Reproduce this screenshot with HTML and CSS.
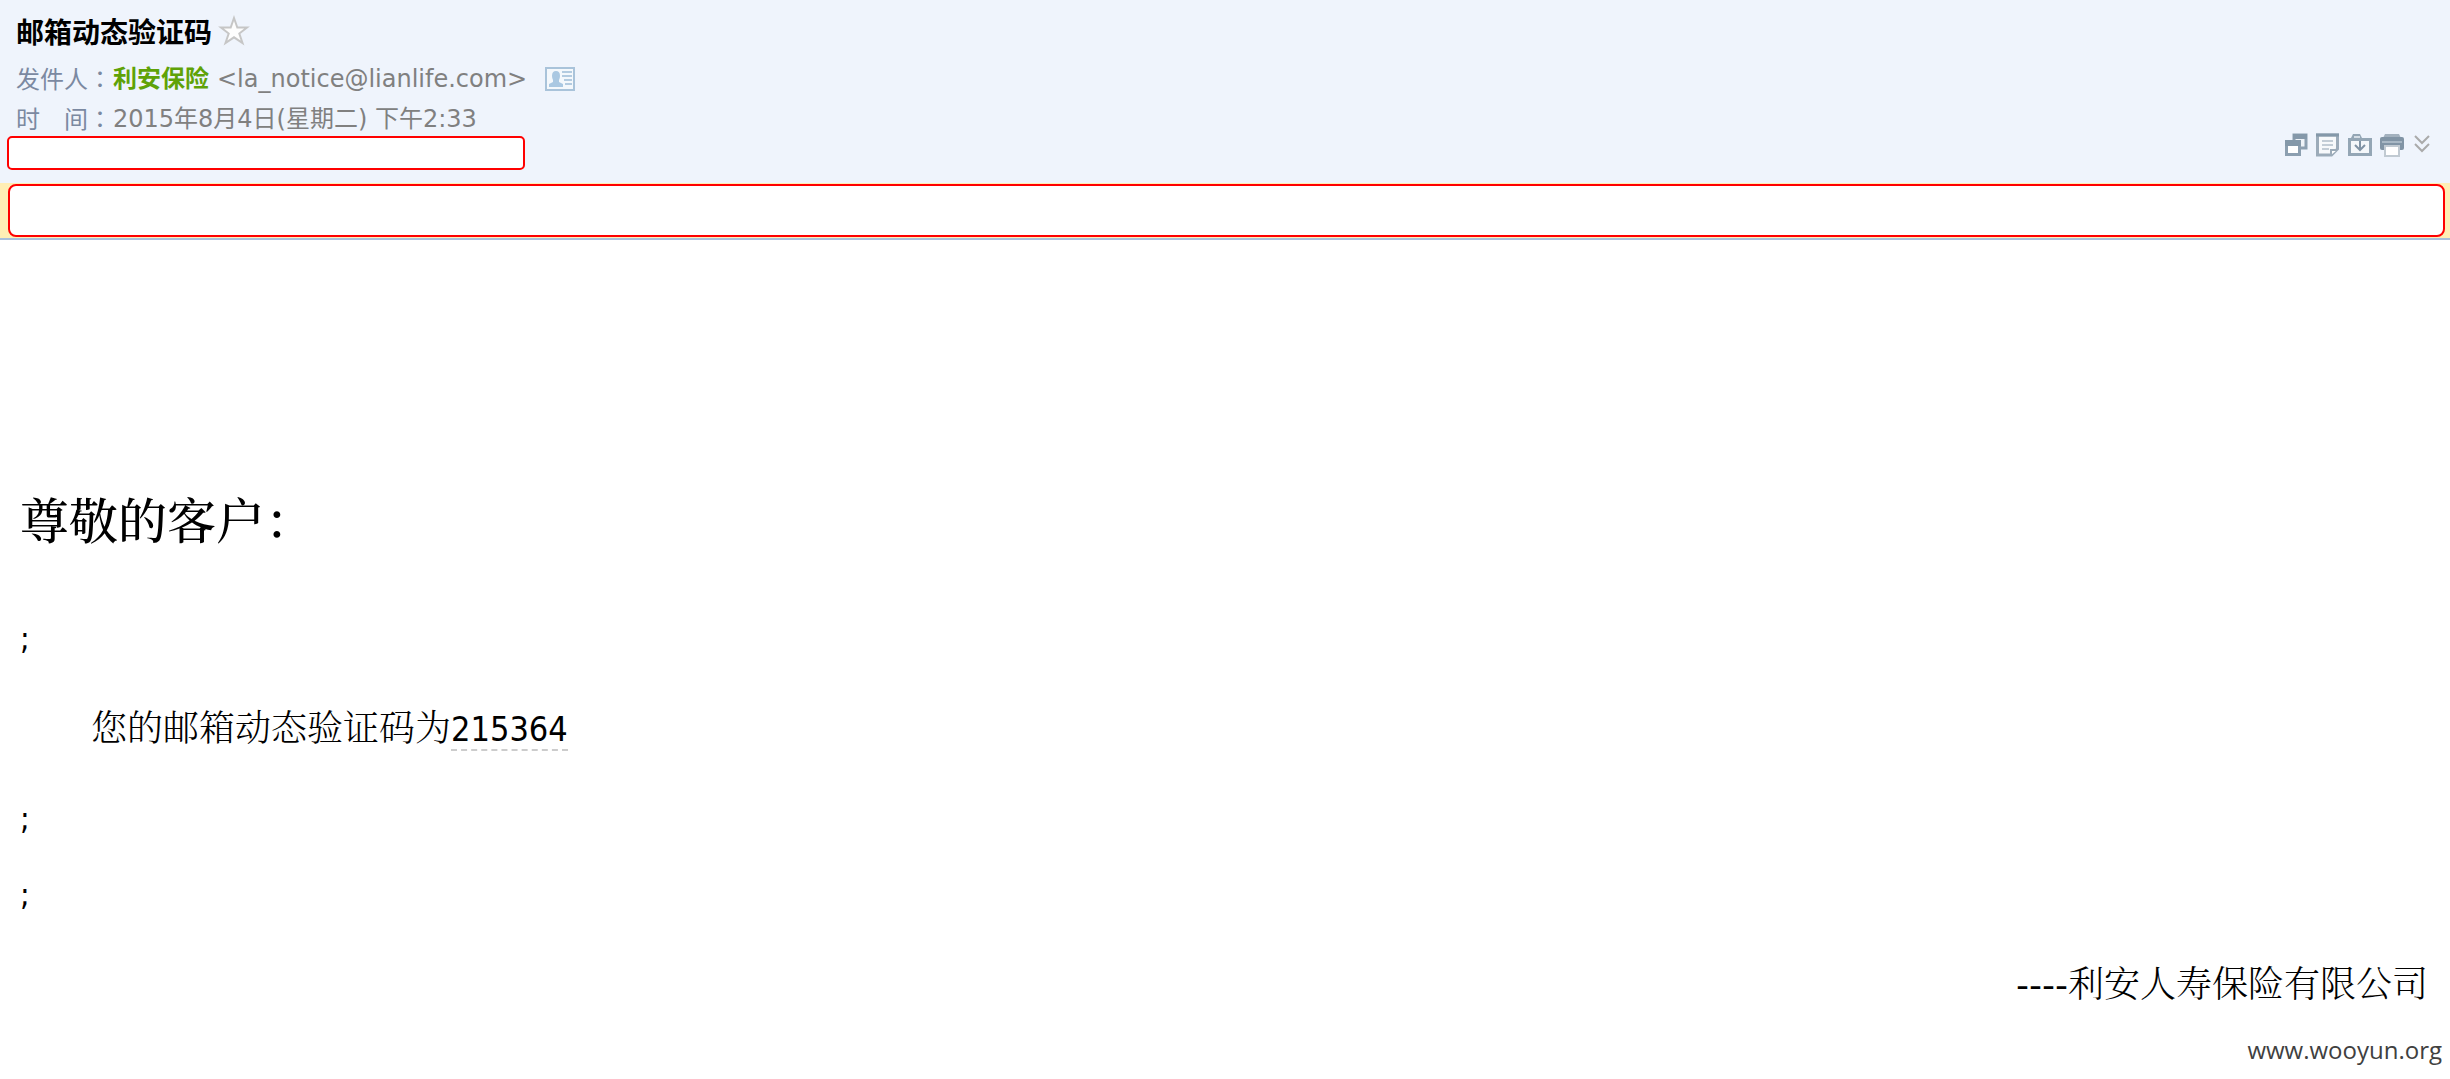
FILE: index.html
```html
<!DOCTYPE html>
<html lang="zh-CN">
<head>
<meta charset="utf-8">
<title>邮箱动态验证码</title>
<link rel="stylesheet" href="styles.css">
</head>
<body>
<header class="mail-head">
  <div class="subject-row">
    <h1 class="subject">邮箱动态验证码</h1>
    <button class="icon-btn" type="button" aria-label="星标">
      <svg width="32" height="32" viewBox="0 0 32 32"><path d="M16 3 L19.300 12.500 H29 L21.300 18.500 L24.500 28 L16 22.300 L7.500 28 L10.700 18.500 L3 12.500 H12.700 Z" fill="#fdfdfd" stroke="#c6c6c6" stroke-width="2"/></svg>
    </button>
  </div>
  <div class="meta-row">
    <span class="label">发件人<span class="colon" lang="zh-TW">：</span></span><b class="sender">利安保险</b>
    <span class="address">&lt;la_notice@lianlife.com&gt;</span>
    <button class="icon-btn card-btn" type="button" aria-label="联系人资料">
      <svg width="30" height="24" viewBox="0 0 30 24"><rect x="1" y="1" width="28" height="22" fill="#f4f8fc" stroke="#a9c3da" stroke-width="2"/><path d="M4 20v-3l4-2v-2q-1-2-1-4 0-5 4-5t4 5q0 2-1 4v2l4 2v3z" fill="#aac8e2"/><path d="M17 5h10M17 9h10M19 13h8M20 17h7" stroke="#b3cbe0" stroke-width="2"/></svg>
    </button>
  </div>
  <div class="meta-row">
    <span class="label">时　间<span class="colon" lang="zh-TW">：</span></span><time class="date" datetime="2015-08-04T14:33">2015年8月4日(星期二) 下午2:33</time>
  </div>
  <div class="tool-row">
    <div class="blank blank-recipient"></div>
    <div class="tools">
      <button class="icon-btn" type="button" aria-label="新窗口打开">
        <svg width="24" height="24" viewBox="0 0 24 24"><path d="M10 2h12v13H10z" fill="#eef3f8" stroke="#8c9fb0" stroke-width="3"/><path d="M9 1h14v5H9z" fill="#8498a9"/><path d="M2.500 9h13v12.500h-13z" fill="#fff" stroke="#8c9fb0" stroke-width="3"/><path d="M1 7h16v6H1z" fill="#8498a9"/></svg>
      </button>
      <button class="icon-btn" type="button" aria-label="备注">
        <svg width="24" height="24" viewBox="0 0 24 24"><path d="M1.500 2h20v14l-6 6h-14z" fill="#f7f9fb" stroke="#9cabb9" stroke-width="3"/><path d="M0 2h23" stroke="#8498a9" stroke-width="3"/><path d="M6 8h11M6 12h11M6 16h7" stroke="#c3cdd6" stroke-width="2"/><path d="M15 22v-5h6" fill="#fff" stroke="#9cabb9" stroke-width="2"/></svg>
      </button>
      <button class="icon-btn" type="button" aria-label="移动到文件夹">
        <svg width="24" height="24" viewBox="0 0 24 24"><path d="M0 23V5h3l2-4h7l2 4h10v18z" fill="#94a6b5"/><path d="M6 4h6" stroke="#d5dee6" stroke-width="2"/><path d="M3 8h18v12H3z" fill="#f4f7fa"/><path d="M12 8v9M7 12l5 5 5-5" fill="none" stroke="#8093a4" stroke-width="2"/></svg>
      </button>
      <button class="icon-btn" type="button" aria-label="打印">
        <svg width="24" height="24" viewBox="0 0 24 24"><path d="M3 5l2-4h14l2 4z" fill="#a3b1be"/><path d="M0 6q0-2 2-2h20q2 0 2 2v9q0 2-2 2H2q-2 0-2-2z" fill="#8194a5"/><path d="M2 9h20" stroke="#a9b8c5" stroke-width="2"/><path d="M5 13h14v10H5z" fill="#fff" stroke="#c1cad2" stroke-width="2"/></svg>
      </button>
      <button class="icon-btn" type="button" aria-label="展开">
        <svg width="20" height="24" viewBox="0 0 20 24"><path d="M3 3l7 7 7-7M3 11l7 7 7-7" fill="none" stroke="#aaa" stroke-width="2"/></svg>
      </button>
    </div>
  </div>
</header>
<section class="notice"><div class="blank blank-notice"></div></section>
<main class="mail-body">
  <h2 class="greeting">尊敬的客户：</h2>
  <p class="mark">;</p>
  <p class="message">您的邮箱动态验证码为<span class="code">215364</span></p>
  <p class="mark">;</p>
  <p class="mark">;</p>
  <p class="signature"><span class="dashes">----</span>利安人寿保险有限公司</p>
</main>
<footer class="watermark">www.wooyun.org</footer>
</body>
</html>
```

FILE: styles.css
```css
* { box-sizing: border-box; }
body {
  margin: 0;
  background: #fff;
  color: #000;
  font-family: "DejaVu Sans Condensed", "Noto Sans CJK SC", sans-serif;
}
h1, h2, p { margin: 0; font-weight: 400; }
.icon-btn {
  display: flex;
  padding: 0;
  border: 0;
  background: none;
  cursor: pointer;
}
.mail-head {
  padding: 11px 0 13px;
  background: #eff4fc;
}
.subject-row, .meta-row {
  display: flex;
  align-items: center;
  padding: 0 16px;
}
.subject-row { gap: 6px; height: 40px; }
.subject {
  font: 700 28px/40px "Noto Sans CJK SC", sans-serif;
}
.meta-row {
  height: 40px;
  margin-top: 8px;
  font: 24px/40px "DejaVu Sans", "Noto Sans CJK SC", sans-serif;
  color: #808080;
}
.meta-row + .meta-row { margin-top: 0; }
.label { width: 97px; color: #7b89a1; white-space: nowrap; }
.colon { font-family: "Noto Sans CJK TC", sans-serif; }
.sender { color: #5fa207; }
.address { margin-left: 8px; }
.card-btn { margin-left: 18px; }
.tool-row {
  display: flex;
  justify-content: space-between;
  align-items: flex-start;
  padding: 0 18px 0 7px;
  margin-top: -6px;
}
.blank { background: #fff; border: 2px solid #f00; }
.blank-recipient {
  width: 518px;
  height: 34px;
  margin-top: 3px;
  border-radius: 5px;
}
.tools { display: flex; gap: 8px; }
.notice {
  padding: 1px 5px 1px 8px;
  background: #ffeeb5;
  border-bottom: 2px solid #a9bfdb;
}
.blank-notice { height: 53px; border-radius: 8px; }
.mail-body { padding: 246px 22px 0 20px; }
.greeting {
  font: 500 49px/64px "Noto Serif CJK SC", "Noto Sans CJK SC", serif;
}
.mark { font-size: 32px; line-height: 48px; }
.greeting + .mark { margin-top: 64px; }
.message {
  margin: 32px 0 36px;
  padding-left: 71px;
  font: 300 36px/64px "Noto Serif CJK SC", "Noto Sans CJK SC", serif;
}
.code {
  font: 34px/40px "DejaVu Sans Condensed", sans-serif;
  border-bottom: 2px dashed #ccc;
}
.mark + .mark { margin-top: 28px; }
.signature {
  margin-top: 32px;
  font: 300 36px/64px "Noto Serif CJK SC", "Noto Sans CJK SC", serif;
  text-align: right;
}
.dashes { font: 36px/40px "DejaVu Sans", sans-serif; }
.watermark {
  padding: 18px 8px 0;
  color: #404040;
  font: 24px/36px "Open Sans", sans-serif;
  text-align: right;
}
```
